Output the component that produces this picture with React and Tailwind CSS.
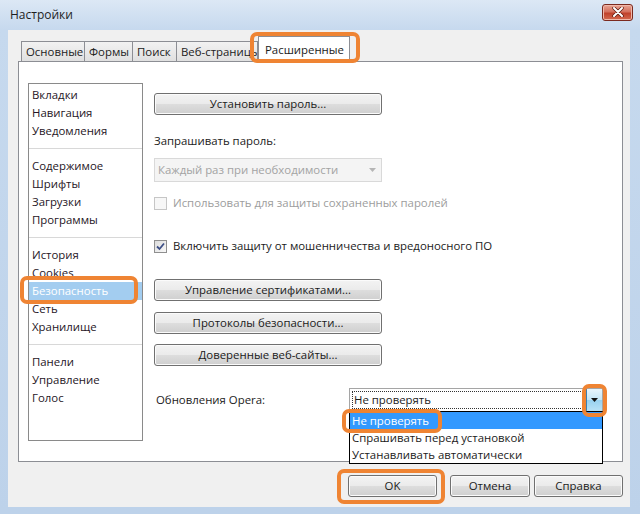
import React from 'react';

const groups = [
  ['Вкладки', 'Навигация', 'Уведомления'],
  ['Содержимое', 'Шрифты', 'Загрузки', 'Программы'],
  ['История', 'Cookies', 'Безопасность', 'Сеть', 'Хранилище'],
  ['Панели', 'Управление', 'Голос'],
];

const tabs = [
  { label: 'Основные', w: 'w-[64px]' },
  { label: 'Формы', w: 'w-[49px]' },
  { label: 'Поиск', w: 'w-[45px]' },
  { label: 'Веб-страницы', w: 'w-[82px]' },
];

function Ring({ className }) {
  return <span className={`pointer-events-none absolute z-20 rounded-[7px] border-[4px] border-[#ef8433] ${className}`} />;
}

function WinButton({ children, className = '' }) {
  return (
    <button
      className={`h-[22px] rounded-[3px] border border-[#707070] bg-[linear-gradient(#f3f3f3,#ebebeb_48%,#dddddd_52%,#cfcfcf)] shadow-[inset_0_0_0_1px_#fbfbfb] text-[#1b1b1b] ${className}`}
    >
      {children}
    </button>
  );
}

function CheckBox({ checked, disabled }) {
  return (
    <span
      className={`flex h-[13px] w-[13px] items-center justify-center border ${
        disabled ? 'border-[#c6c6c6] bg-[#f7f7f7]' : 'border-[#8f8f8f] bg-[linear-gradient(135deg,#dcdcdc,#f8f8f8)]'
      }`}
    >
      {checked && (
        <svg width="9" height="9" viewBox="0 0 9 9">
          <path d="M1 4.5 L3.5 7 L8 1.5" fill="none" stroke="#3d4f86" strokeWidth="1.8" />
        </svg>
      )}
    </span>
  );
}

export default function App() {
  return (
    <div className="flex h-[514px] w-[640px] flex-col bg-[linear-gradient(180deg,#dce8f5,#c6d9ee_30px,#bdd2ea)] font-['Open_Sans',sans-serif] text-[11.4px] text-[#1b1b1b]">
      {/* title bar */}
      <div className="flex h-[30px] items-center justify-between pl-[10px] pr-[7px]">
        <span className="text-[12px] text-[#1e1e1e]">Настройки</span>
        <button className="mt-[-6px] flex h-[17px] w-[31px] items-center justify-center rounded-[3px] border border-[#7b2a1f] bg-[linear-gradient(#e9a595,#d4705d_45%,#c0412b_55%,#d46a50)] shadow-[inset_0_0_0_1px_#f0b8aa]">
          <svg width="12" height="10" viewBox="0 0 12 10">
            <path d="M2 1 L10 9 M10 1 L2 9" stroke="#5a1a10" strokeWidth="3.4" strokeLinecap="round" />
            <path d="M2 1 L10 9 M10 1 L2 9" stroke="#ffffff" strokeWidth="2" strokeLinecap="round" />
          </svg>
        </button>
      </div>

      {/* dialog body */}
      <div className="ml-[8px] mr-[10px] mb-[7px] flex flex-1 flex-col bg-[#f0f0f0] pl-[10px] pr-[7px]">
        {/* tabs */}
        <div className="mt-[6px] flex h-[25px] items-end pl-[3px]">
          {tabs.map(t => (
            <div
              key={t.label}
              className={`${t.w} -mr-px flex h-[20px] items-center overflow-hidden whitespace-nowrap border border-b-0 border-[#8c8e94] bg-[linear-gradient(#f2f2f2,#e0e0e0)] pl-[4px] text-[#222]`}
            >
              {t.label}
            </div>
          ))}
          <div className="relative z-10 -mb-px ml-[1px] flex h-[26px] w-[92px] items-center border border-b-0 border-[#8c8e94] bg-white pl-[6px]">
            Расширенные
            <Ring className="-left-[9px] -right-[11px] -top-[5px] -bottom-[1px]" />
          </div>
        </div>

        {/* tab panel */}
        <div className="flex h-[401px] border border-[#8c8e94] bg-white pl-[9px] pt-[21px]">
          {/* sidebar */}
          <div className="h-[358px] w-[115px] border border-[#8a8a8a] pt-[2px]">
            {groups.map((g, gi) => (
              <div key={gi}>
                {gi > 0 && <div className="my-[8px] h-px bg-[#d8d8d8]" />}
                {g.map(item =>
                  item === 'Безопасность' ? (
                    <div key={item} className="relative h-[18px] bg-[#a3cdf0] pl-[3px] leading-[18px] text-white">
                      {item}
                      <Ring className="-left-[9px] right-[4px] -top-[6px] -bottom-[4px]" />
                    </div>
                  ) : (
                    <div key={item} className="h-[18px] pl-[3px] leading-[18px] text-[#261626]">
                      {item}
                    </div>
                  )
                )}
              </div>
            ))}
          </div>

          {/* right column */}
          <div className="ml-[11px] mt-[10px] flex flex-col">
            <WinButton className="w-[228px]">Установить пароль...</WinButton>
            <div className="mt-[17px] h-[18px] leading-[18px]">Запрашивать пароль:</div>
            <div className="mt-[8px] flex h-[24px] w-[228px] items-center justify-between border border-[#d9d9d9] bg-[#f4f4f4] pl-[3px] pr-[5px] text-[#a3a3a3]">
              <span>Каждый раз при необходимости</span>
              <svg width="7" height="4" viewBox="0 0 7 4">
                <path d="M0 0 H7 L3.5 4 Z" fill="#b5b5b5" />
              </svg>
            </div>
            <div className="mt-[12px] flex h-[18px] items-center gap-[6px] text-[#9d9d9d]">
              <CheckBox disabled />
              <span>Использовать для защиты сохраненных паролей</span>
            </div>
            <div className="mt-[25px] flex h-[18px] items-center gap-[6px]">
              <CheckBox checked />
              <span>Включить защиту от мошенничества и вредоносного ПО</span>
            </div>
            <WinButton className="mt-[24px] w-[228px]">Управление сертификатами...</WinButton>
            <WinButton className="mt-[11px] w-[228px]">Протоколы безопасности...</WinButton>
            <WinButton className="mt-[10px] w-[228px]">Доверенные веб-сайты...</WinButton>

            <div className="mt-[22px] flex items-center">
              <span className="w-[195px] pl-[2px]">Обновления Opera:</span>
              <div className="relative flex h-[24px] w-[254px] items-stretch border border-[#a5a5a5] bg-white">
                <div className="m-[2px] mr-[1px] flex flex-1 items-center border border-dotted border-[#333] pl-[1px] leading-none">
                  Не проверять
                </div>
                <div className="relative flex w-[16px] items-center justify-center border-l border-[#3c7fb1] bg-[linear-gradient(#e8f5fc,#c4e5f6_50%,#98d1ef_52%,#b9e2f6)]">
                  <svg width="7" height="4" viewBox="0 0 7 4">
                    <path d="M0 0 H7 L3.5 4 Z" fill="#111" />
                  </svg>
                  <Ring className="-left-[5px] -right-[5px] -top-[5px] -bottom-[6px]" />
                </div>

                {/* opened list */}
                <div className="absolute left-[-1px] right-[-1px] top-[22px] z-10 border border-black bg-white">
                  <div className="relative h-[17px] bg-[#3399ff] pl-[2px] leading-[17px] text-white">
                    Не проверять
                    <Ring className="-left-[8px] w-[100px] -top-[3px] -bottom-[4px]" />
                  </div>
                  <div className="h-[17px] pl-[2px] leading-[17px]">Спрашивать перед установкой</div>
                  <div className="h-[17px] pl-[2px] leading-[17px]">Устанавливать автоматически</div>
                </div>
              </div>
            </div>
          </div>
        </div>

        {/* dialog buttons */}
        <div className="mt-[13px] flex justify-end">
          <div className="relative">
            <WinButton className="w-[89px] border-[#3c7fb1]">OK</WinButton>
            <Ring className="-left-[11px] -right-[8px] -top-[6px] -bottom-[7px]" />
          </div>
          <WinButton className="ml-[13px] w-[80px]">Отмена</WinButton>
          <WinButton className="ml-[4px] w-[89px]">Справка</WinButton>
        </div>
      </div>
    </div>
  );
}
